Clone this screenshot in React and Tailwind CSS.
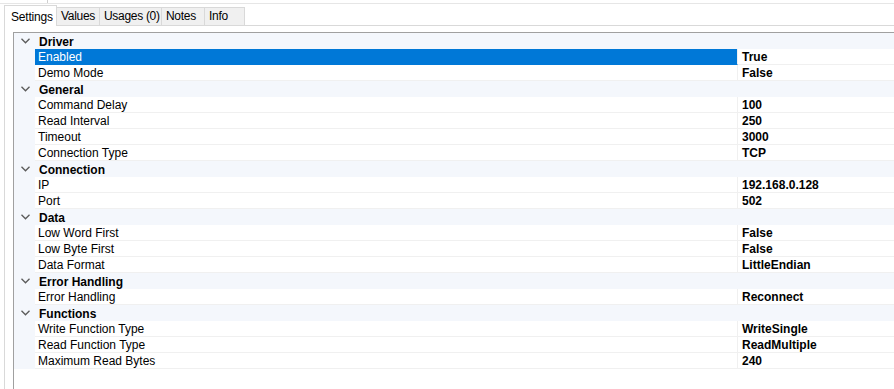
import React from "react";

const data = [
  { cat: "Driver", items: [["Enabled", "True", true], ["Demo Mode", "False"]] },
  { cat: "General", items: [["Command Delay", "100"], ["Read Interval", "250"], ["Timeout", "3000"], ["Connection Type", "TCP"]] },
  { cat: "Connection", items: [["IP", "192.168.0.128"], ["Port", "502"]] },
  { cat: "Data", items: [["Low Word First", "False"], ["Low Byte First", "False"], ["Data Format", "LittleEndian"]] },
  { cat: "Error Handling", items: [["Error Handling", "Reconnect"]] },
  { cat: "Functions", items: [["Write Function Type", "WriteSingle"], ["Read Function Type", "ReadMultiple"], ["Maximum Read Bytes", "240"]] },
];

function Chevron() {
  return (
    <svg width="9" height="6" viewBox="0 0 9 6" className="block">
      <path d="M0.5 0.8 L4.5 4.8 L8.5 0.8" fill="none" stroke="#5a5a5a" strokeWidth="1.3" />
    </svg>
  );
}

const tabs = [
  ["Values", "w-[43px]"],
  ["Usages (0)", "w-[62px]"],
  ["Notes", "w-[43px]"],
  ["Info", "w-[40px]"],
];

export default function App() {
  return (
    <div
      className="w-[894px] h-[389px] bg-white overflow-hidden flex flex-col text-[12px] text-black"
      style={{ fontFamily: '"Liberation Sans", Arial, sans-serif' }}
    >
      <div className="h-[4px] shrink-0 border-b border-[#e6e6e6] flex">
        <div className="ml-[47px] w-px bg-[#cfcfcf]" />
      </div>
      <div className="h-[22px] shrink-0 flex items-end pl-[4px]">
        <div className="h-[21px] px-[6px] pt-[4px] bg-white border-l border-t border-r border-[#d9d9d9] leading-[15px] w-[53px] tracking-[-0.2px]">
          Settings
        </div>
        <div className="flex-1 flex items-end border-b border-[#d9d9d9] h-[19px]">
          {tabs.map(([t, w]) => (
            <div
              key={t}
              className={
                "h-[18px] pl-[4px] pt-[1px] bg-[#f0f0f0] border-t border-r border-[#d9d9d9] leading-[15px] whitespace-nowrap overflow-hidden tracking-[-0.3px] " +
                w
              }
            >
              {t}
            </div>
          ))}
        </div>
      </div>
      <div className="flex-1 ml-[4px] border-l border-[#d9d9d9] pt-[6px] pl-[8px]">
        <div className="h-full border-l border-t border-[#a0a0a0]">
          {data.map((g) => (
            <div key={g.cat}>
              <div className="h-[16px] bg-[#f4f7fc] flex items-center">
                <div className="w-[21px] flex justify-center pl-[1px]">
                  <Chevron />
                </div>
                <div className="pl-[4px] pt-[2px] font-bold leading-[14px]">{g.cat}</div>
              </div>
              {g.items.map(([k, v, sel]) => (
                <div key={k} className="h-[16px] flex">
                  <div className="w-[21px] bg-[#f4f7fc]" />
                  <div
                    className={
                      "w-[703px] pl-[3px] pt-[1px] leading-[14px] border-b border-r " +
                      (sel
                        ? "bg-[#0078d7] text-white border-b-[#0078d7] border-r-[#f0f0f0]"
                        : "border-[#f0f0f0]")
                    }
                  >
                    {k}
                  </div>
                  <div className="flex-1 pl-[4px] pt-[1px] font-bold leading-[14px] border-b border-[#f0f0f0]">
                    {v}
                  </div>
                </div>
              ))}
            </div>
          ))}
        </div>
      </div>
    </div>
  );
}
